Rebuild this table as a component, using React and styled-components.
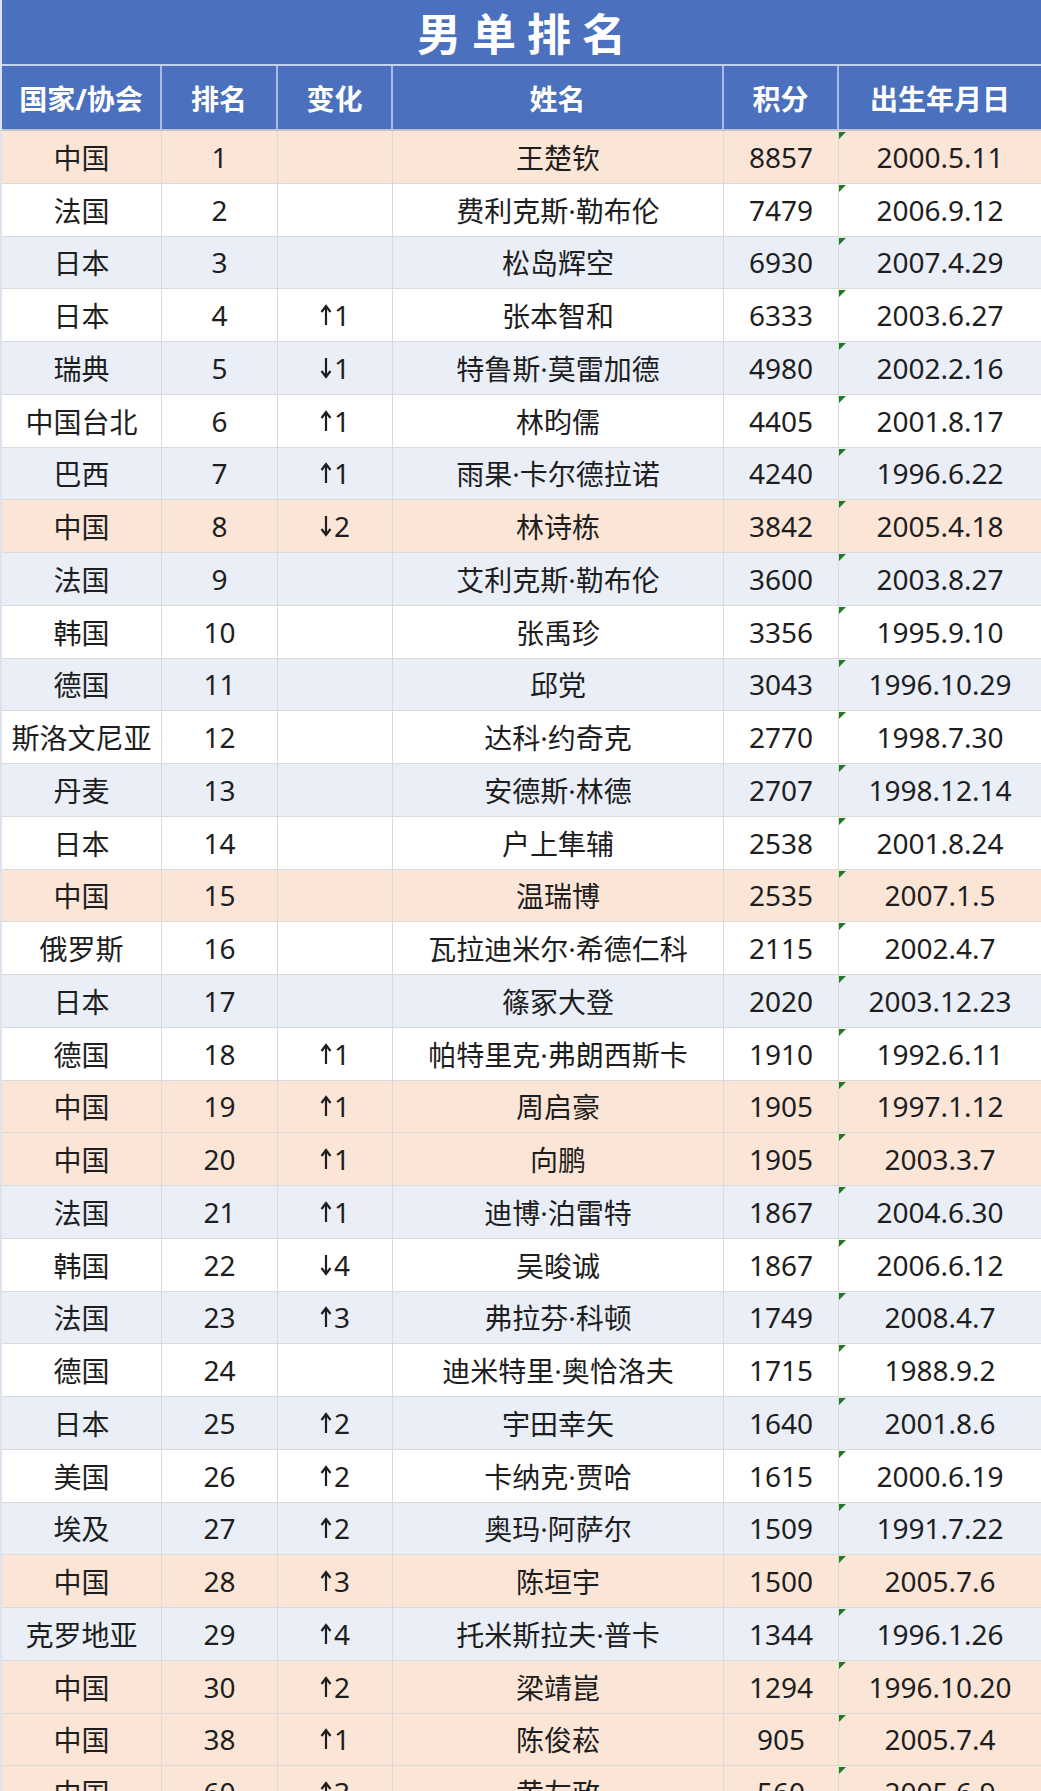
import React from 'react';
import styled, { createGlobalStyle } from 'styled-components';

const GlobalStyle = createGlobalStyle`
  body {
    margin: 0;
    background: #ffffff;
    font-family: "Noto Sans", "Noto Sans CJK SC", sans-serif;
  }
`;

const BLUE = '#4a70be';
const COLUMNS = '160px 116px 115px 331px 115px 1fr';

const tones = {
  cn: '#fbe5d7',
  band: '#e9eef7',
  plain: '#ffffff',
};

const Sheet = styled.div`
  width: 1041px;
  box-sizing: border-box;
  border-left: 2px solid #dde3ee;
  color: #1e1e1e;
`;

const TitleBar = styled.div`
  height: 64px;
  background: ${BLUE};
  border-bottom: 2px solid #c4d1ec;
  display: flex;
  align-items: center;
  justify-content: center;
  padding-left: 11px;
  color: #ffffff;
  font-family: "Noto Sans CJK SC", sans-serif;
  font-size: 44px;
  font-weight: 700;
  letter-spacing: 11px;
`;

const HeaderRow = styled.div`
  display: grid;
  grid-template-columns: ${COLUMNS};
  height: 65px;
  box-sizing: border-box;
  background: ${BLUE};
  border-bottom: 2px solid #bfc3ca;
`;

const HeadCell = styled.div`
  display: flex;
  align-items: center;
  justify-content: center;
  color: #ffffff;
  font-size: 28px;
  font-weight: 700;
  border-right: 2px solid #a9bce4;

  &:last-child {
    border-right: none;
  }
`;

const Row = styled.div`
  display: grid;
  grid-template-columns: ${COLUMNS};
  height: 52.75px;
  box-sizing: border-box;
  background: ${(p) => tones[p.$tone]};
  border-bottom: 1px solid #dadada;
`;

const Cell = styled.div`
  position: relative;
  display: flex;
  align-items: center;
  justify-content: center;
  font-size: 28px;
  white-space: nowrap;
  border-right: 1px solid #dadada;

  &:last-child {
    border-right: none;
  }
`;

const Flag = styled.span`
  position: absolute;
  top: 1px;
  left: 0;
  width: 0;
  height: 0;
  border-top: 7px solid #1f7a22;
  border-right: 7px solid transparent;
`;

const Change = styled.span`
  display: inline-flex;
  align-items: center;
  gap: 2px;
`;

const Arrow = ({ dir }) => (
  <svg width="12" height="22" viewBox="0 0 12 22" style={{ transform: dir === 'down' ? 'rotate(180deg)' : 'none' }}>
    <path d="M6 2.5 V21" stroke="#1e1e1e" strokeWidth="2.2" fill="none" />
    <path d="M1.5 8 L6 2 L10.5 8" stroke="#1e1e1e" strokeWidth="2.2" fill="none" strokeLinejoin="miter" />
  </svg>
);

const players = [
  ['中国', 1, '', '王楚钦', 8857, '2000.5.11'],
  ['法国', 2, '', '费利克斯·勒布伦', 7479, '2006.9.12'],
  ['日本', 3, '', '松岛辉空', 6930, '2007.4.29'],
  ['日本', 4, '+1', '张本智和', 6333, '2003.6.27'],
  ['瑞典', 5, '-1', '特鲁斯·莫雷加德', 4980, '2002.2.16'],
  ['中国台北', 6, '+1', '林昀儒', 4405, '2001.8.17'],
  ['巴西', 7, '+1', '雨果·卡尔德拉诺', 4240, '1996.6.22'],
  ['中国', 8, '-2', '林诗栋', 3842, '2005.4.18'],
  ['法国', 9, '', '艾利克斯·勒布伦', 3600, '2003.8.27'],
  ['韩国', 10, '', '张禹珍', 3356, '1995.9.10'],
  ['德国', 11, '', '邱党', 3043, '1996.10.29'],
  ['斯洛文尼亚', 12, '', '达科·约奇克', 2770, '1998.7.30'],
  ['丹麦', 13, '', '安德斯·林德', 2707, '1998.12.14'],
  ['日本', 14, '', '户上隼辅', 2538, '2001.8.24'],
  ['中国', 15, '', '温瑞博', 2535, '2007.1.5'],
  ['俄罗斯', 16, '', '瓦拉迪米尔·希德仁科', 2115, '2002.4.7'],
  ['日本', 17, '', '篠冢大登', 2020, '2003.12.23'],
  ['德国', 18, '+1', '帕特里克·弗朗西斯卡', 1910, '1992.6.11'],
  ['中国', 19, '+1', '周启豪', 1905, '1997.1.12'],
  ['中国', 20, '+1', '向鹏', 1905, '2003.3.7'],
  ['法国', 21, '+1', '迪博·泊雷特', 1867, '2004.6.30'],
  ['韩国', 22, '-4', '吴晙诚', 1867, '2006.6.12'],
  ['法国', 23, '+3', '弗拉芬·科顿', 1749, '2008.4.7'],
  ['德国', 24, '', '迪米特里·奥恰洛夫', 1715, '1988.9.2'],
  ['日本', 25, '+2', '宇田幸矢', 1640, '2001.8.6'],
  ['美国', 26, '+2', '卡纳克·贾哈', 1615, '2000.6.19'],
  ['埃及', 27, '+2', '奥玛·阿萨尔', 1509, '1991.7.22'],
  ['中国', 28, '+3', '陈垣宇', 1500, '2005.7.6'],
  ['克罗地亚', 29, '+4', '托米斯拉夫·普卡', 1344, '1996.1.26'],
  ['中国', 30, '+2', '梁靖崑', 1294, '1996.10.20'],
  ['中国', 38, '+1', '陈俊菘', 905, '2005.7.4'],
  ['中国', 60, '+3', '黄友政', 560, '2005.6.9'],
];

const headers = ['国家/协会', '排名', '变化', '姓名', '积分', '出生年月日'];

const toneFor = (country, i) => {
  if (country === '中国') return 'cn';
  return i % 2 === 0 ? 'band' : 'plain';
};

const App = () => (
  <>
    <GlobalStyle />
    <Sheet>
      <TitleBar>男单排名</TitleBar>
      <HeaderRow>
        {headers.map((h) => (
          <HeadCell key={h}>{h}</HeadCell>
        ))}
      </HeaderRow>
      {players.map(([country, rank, change, name, points, born], i) => (
        <Row key={rank} $tone={toneFor(country, i)}>
          <Cell>{country}</Cell>
          <Cell>{rank}</Cell>
          <Cell>
            {change && (
              <Change>
                <Arrow dir={change[0] === '+' ? 'up' : 'down'} />
                {change.slice(1)}
              </Change>
            )}
          </Cell>
          <Cell>{name}</Cell>
          <Cell>{points}</Cell>
          <Cell>
            <Flag />
            {born}
          </Cell>
        </Row>
      ))}
    </Sheet>
  </>
);

export default App;
